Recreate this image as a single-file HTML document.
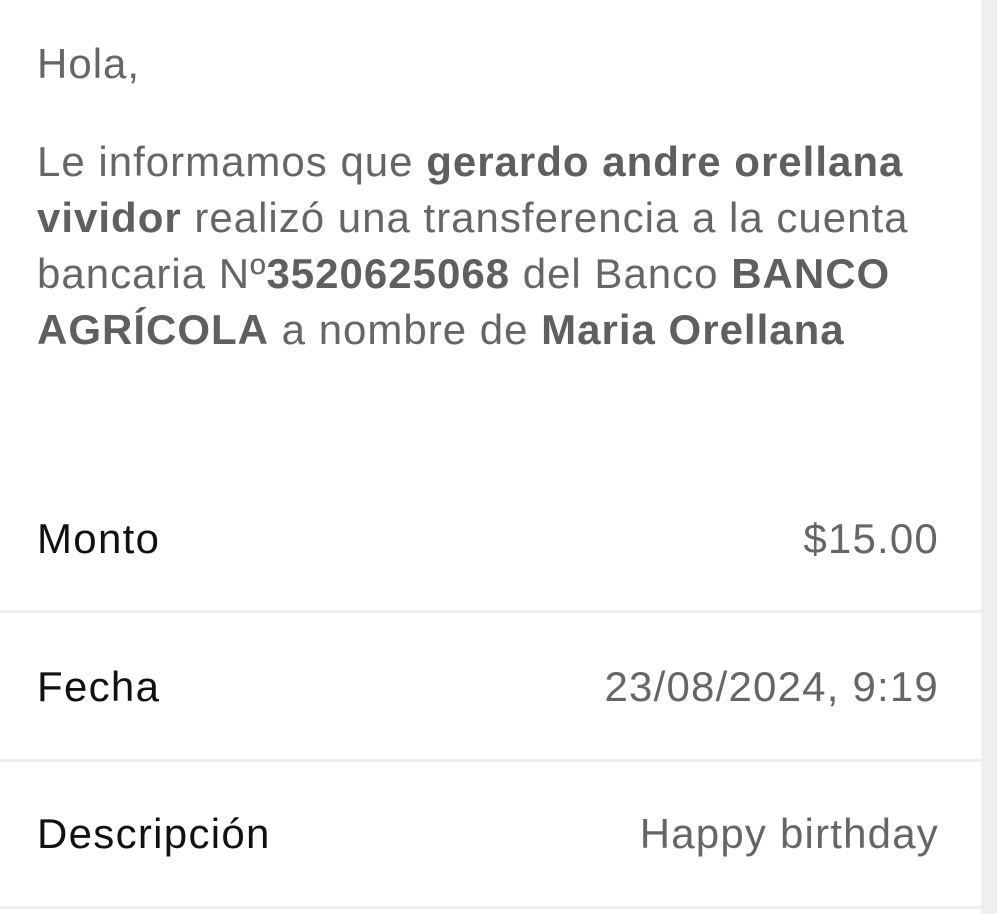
<!DOCTYPE html>
<html><head><meta charset="utf-8"><style>
html,body{margin:0;padding:0;}
body{width:997px;height:914px;background:#fff;position:relative;overflow:hidden;font-family:"Liberation Sans",sans-serif;}
.strip{position:absolute;left:981px;top:0;width:16px;height:914px;background:#efefef;}
.t{position:absolute;left:37px;color:#666;font-size:42px;letter-spacing:1px;white-space:nowrap;}
b{color:#5f5f5f;}
.hr{position:absolute;left:0;width:981px;height:3px;background:#efefef;}
.l{position:absolute;left:37px;font-size:42px;letter-spacing:1.3px;color:#111;white-space:nowrap;}
.r{position:absolute;right:58px;font-size:42px;letter-spacing:1.2px;color:#666;white-space:nowrap;}
</style></head><body>
<div class="strip"></div>
<div class="t" style="top:40px">Hola,</div>
<div class="t" style="top:138px">Le informamos que <b>gerardo andre orellana</b></div>
<div class="t" style="top:194px"><b>vividor</b> realizó una transferencia a la cuenta</div>
<div class="t" style="top:250px">bancaria Nº<b>3520625068</b> del Banco <b>BANCO</b></div>
<div class="t" style="top:306px"><b>AGRÍCOLA</b> a nombre de <b>Maria Orellana</b></div>
<div class="l" style="top:515px">Monto</div><div class="r" style="top:515px">$15.00</div>
<div class="hr" style="top:610px"></div>
<div class="l" style="top:663px">Fecha</div><div class="r" style="top:663px">23/08/2024, 9:19</div>
<div class="hr" style="top:759px"></div>
<div class="l" style="top:810px">Descripción</div><div class="r" style="top:810px">Happy birthday</div>
<div class="hr" style="top:906px"></div>
</body></html>
